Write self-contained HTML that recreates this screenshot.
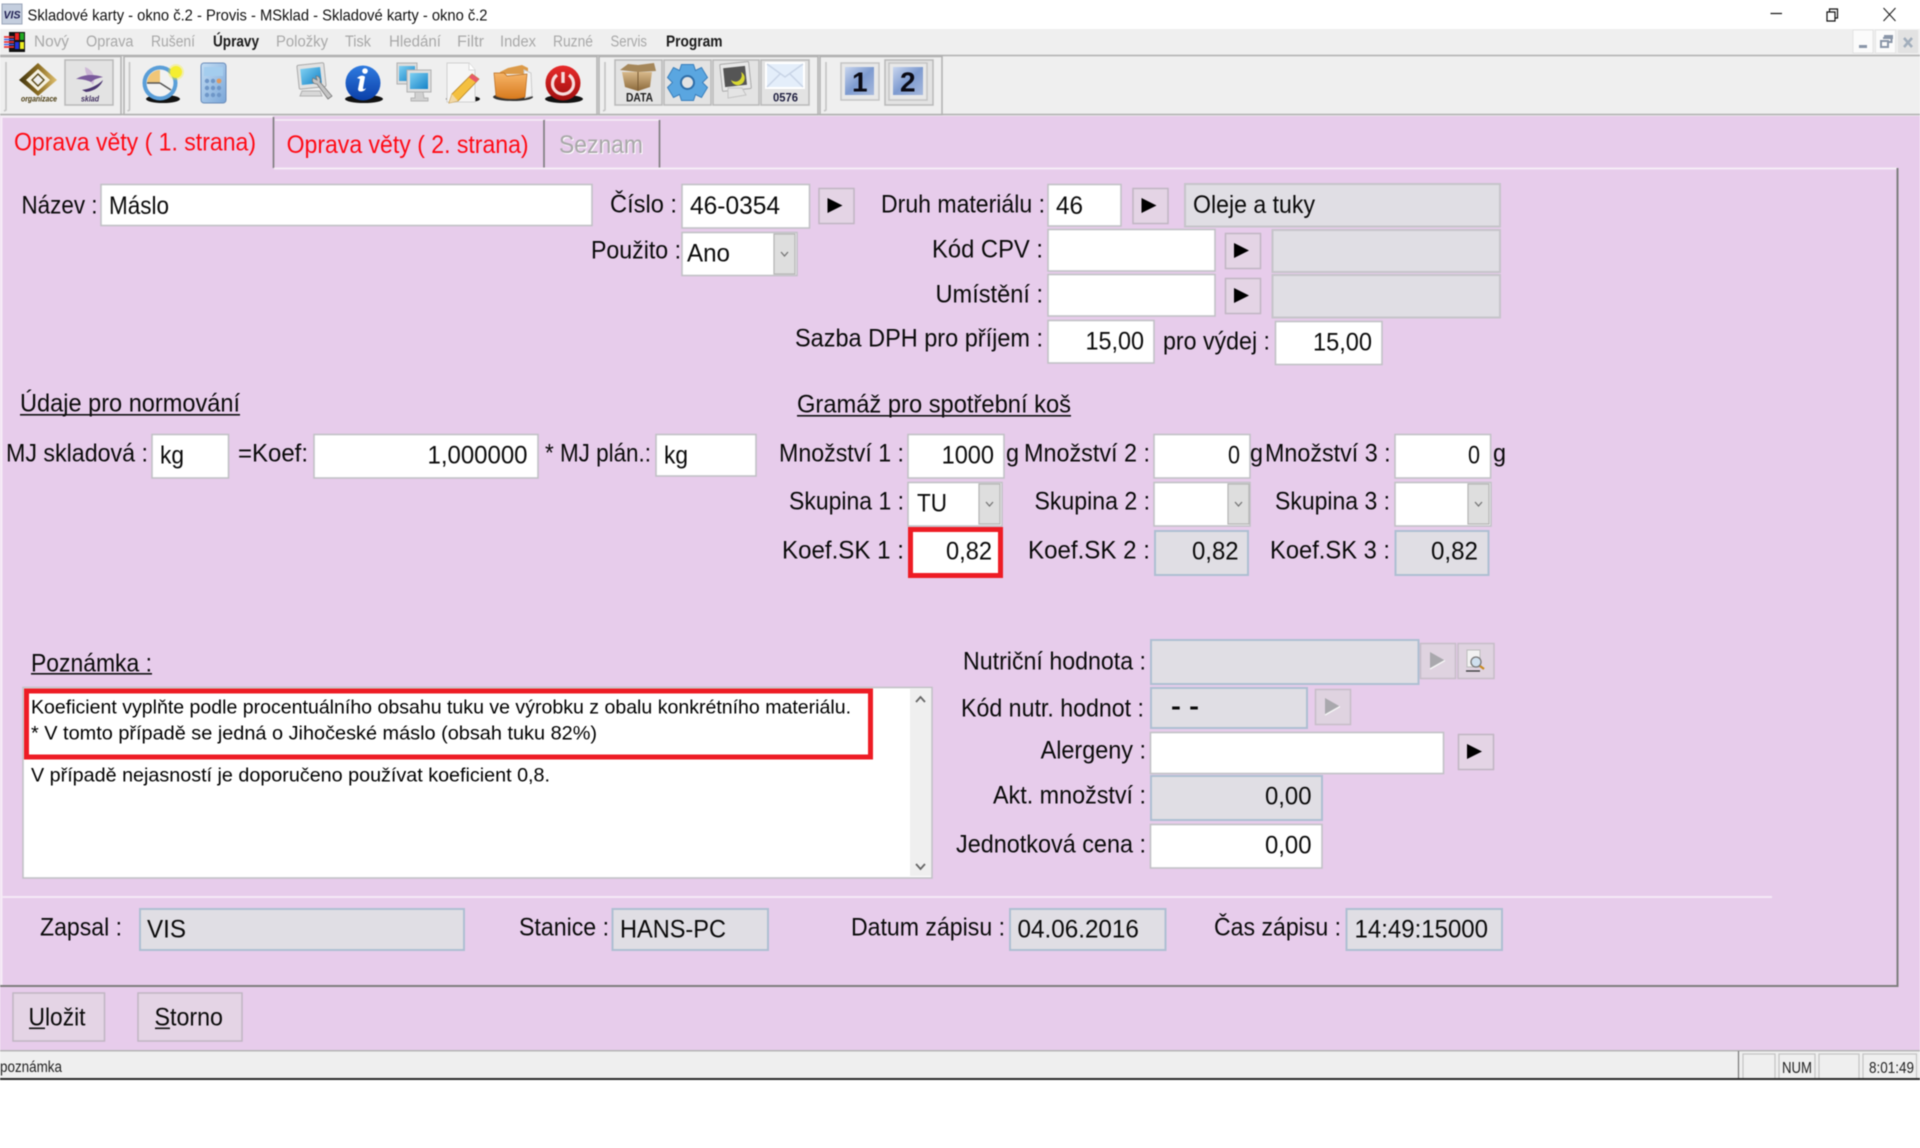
<!DOCTYPE html>
<html lang="cs"><head><meta charset="utf-8"><title>Skladové karty</title>
<style>
html,body{margin:0;padding:0;background:#fff;width:1920px;height:1148px;overflow:hidden}
svg{display:block;filter:blur(.4px)}
text{font-family:"Liberation Sans",Arial,sans-serif;fill:#0a0a0a;font-size:25px;transform:translateY(.6px)}
.m{font-size:15.5px;fill:#a8a8a8}
.mb{font-size:15.5px;fill:#1a1a1a;font-weight:bold}
.t{font-size:16px;fill:#111}
.tab{font-size:25px;fill:#ff0a14}
.memo{font-size:19.5px;fill:#000}
.st{font-size:15.5px;fill:#222}
.i{fill:#fff;stroke:#c2c2c6;stroke-width:1.6}
.r{fill:#e0dee4;stroke:#aebfd2;stroke-width:2}
.g{fill:#e0dee4;stroke:#c6c4ca;stroke-width:2}
.b{fill:#e4d4e5;stroke:#c0b6c2;stroke-width:1.5}
.tb{fill:#e3e3e3;stroke:#b9b9b9;stroke-width:1.5}
.sec{fill:#efefef;stroke:#b0b0b0;stroke-width:1.5}
.cb{fill:#dedede;stroke:#b4b4b4;stroke-width:1.2}
.ch{fill:none;stroke:#777;stroke-width:1.3}
.red{fill:none;stroke:#ee1c25;stroke-width:5}
</style></head><body>
<svg xmlns="http://www.w3.org/2000/svg" width="1920" height="1148" viewBox="0 0 1920 1148">
<defs>
<linearGradient id="gold" x1="0" y1="0" x2="1" y2="0"><stop offset="0" stop-color="#3f3410"/><stop offset=".5" stop-color="#8a6c22"/><stop offset="1" stop-color="#e0c070"/></linearGradient>
<linearGradient id="blue" x1="0" y1="0" x2="0" y2="1"><stop offset="0" stop-color="#2f7be0"/><stop offset="1" stop-color="#0b3fa8"/></linearGradient>
<linearGradient id="scr" x1="0" y1="0" x2="1" y2="1"><stop offset="0" stop-color="#7fd0f2"/><stop offset="1" stop-color="#1583c8"/></linearGradient>
<linearGradient id="fold" x1="0" y1="0" x2="0" y2="1"><stop offset="0" stop-color="#f6b568"/><stop offset="1" stop-color="#d87a1e"/></linearGradient>
<linearGradient id="pw" x1="0" y1="0" x2="0" y2="1"><stop offset="0" stop-color="#e82a2a"/><stop offset="1" stop-color="#a00e0e"/></linearGradient>
<linearGradient id="box" x1="0" y1="0" x2="0" y2="1"><stop offset="0" stop-color="#d8b98a"/><stop offset="1" stop-color="#8c6a3c"/></linearGradient>
<linearGradient id="sky" x1="0" y1="0" x2="1" y2="1"><stop offset="0" stop-color="#c9d6ee"/><stop offset=".5" stop-color="#7e9bd0"/><stop offset="1" stop-color="#a6b8dc"/></linearGradient>
<linearGradient id="calc" x1="0" y1="0" x2="1" y2="1"><stop offset="0" stop-color="#c4def4"/><stop offset="1" stop-color="#7aa6d8"/></linearGradient>
<g id="ar"><rect class="b" x=".5" y=".5" width="35" height="35"/><polygon points="9,10 9,25 24,17.5" fill="#000"/></g>
<g id="ard"><rect x=".5" y=".5" width="35" height="35" fill="#dfd3e0" stroke="#c6bdc8" stroke-width="1.5"/><polygon points="10,9 10,26 25,17.5" fill="#a9a8ad"/><polyline points="10,26 25,17.5" stroke="#f6f6f6" stroke-width="1.5" fill="none"/></g>
<g id="cv"><rect class="cb" x="0" y="0" width="21" height="40"/><path class="ch" d="M7,18 l3.5,4 l3.5,-4"/></g>
</defs>

<rect width="1920" height="1148" fill="#fff"/>
<!-- title bar -->
<rect x="2" y="4" width="20" height="20" fill="#c4cede" stroke="#9aa4b8"/>
<text x="3.5" y="18" textLength="17" lengthAdjust="spacingAndGlyphs" style="font-size:11px;font-weight:bold;font-style:italic;fill:#1c1c50">VIS</text>
<text class="t" x="27.5" y="20" textLength="460" lengthAdjust="spacingAndGlyphs">Skladové karty - okno č.2 - Provis - MSklad - Skladové karty - okno č.2</text>
<path d="M1770.5,13.5h11.5" stroke="#111" stroke-width="1.2"/>
<path d="M1827,12h8v9h-8zM1829.5,12v-3h8v9h-2.5" fill="none" stroke="#111" stroke-width="1.2"/>
<path d="M1883.5,8l12,13M1895.5,8l-12,13" stroke="#222" stroke-width="1.1"/>

<!-- menu bar -->
<rect x="0" y="29" width="1920" height="27" fill="#efefef"/>
<rect x="9" y="32" width="16" height="20" fill="#111"/>
<rect x="15" y="33" width="4" height="7" fill="#e22"/><rect x="20" y="33" width="4" height="7" fill="#2a2"/><rect x="15" y="42" width="4" height="7" fill="#23d"/><rect x="20" y="42" width="4" height="7" fill="#ee2"/>
<path d="M4,37h10M4,42h10M4,47h10" stroke="#e33" stroke-width="1.8"/><path d="M4,39.5h10M4,44.5h10" stroke="#46e" stroke-width="1.6"/>
<text class="m" x="34" y="46" textLength="35" lengthAdjust="spacingAndGlyphs">Nový</text>
<text class="m" x="86" y="46" textLength="47.5" lengthAdjust="spacingAndGlyphs">Oprava</text>
<text class="m" x="151" y="46" textLength="44" lengthAdjust="spacingAndGlyphs">Rušení</text>
<text class="mb" x="213" y="46" textLength="46" lengthAdjust="spacingAndGlyphs">Úpravy</text>
<text class="m" x="276" y="46" textLength="52" lengthAdjust="spacingAndGlyphs">Položky</text>
<text class="m" x="345" y="46" textLength="26" lengthAdjust="spacingAndGlyphs">Tisk</text>
<text class="m" x="389" y="46" textLength="52" lengthAdjust="spacingAndGlyphs">Hledání</text>
<text class="m" x="457" y="46" textLength="27" lengthAdjust="spacingAndGlyphs">Filtr</text>
<text class="m" x="500" y="46" textLength="36" lengthAdjust="spacingAndGlyphs">Index</text>
<text class="m" x="553" y="46" textLength="40" lengthAdjust="spacingAndGlyphs">Ruzné</text>
<text class="m" x="610.5" y="46" textLength="36.5" lengthAdjust="spacingAndGlyphs">Servis</text>
<text class="mb" x="666" y="46" textLength="56.5" lengthAdjust="spacingAndGlyphs">Program</text>
<rect x="1853" y="30" width="20" height="23" fill="#fbfbfb" stroke="#e4e4e4"/><rect x="1859" y="45" width="8" height="3" fill="#8a96a8"/>
<rect x="1875.5" y="30" width="20" height="23" fill="#fbfbfb" stroke="#e4e4e4"/><path d="M1883,38h9v-2h-7v2M1881,41h7v6h-7z M1888,42h3.5v-6" fill="none" stroke="#8a96a8" stroke-width="2"/>
<rect x="1898" y="30" width="20" height="23" fill="#e2e2e2"/><path d="M1904,38l8,9M1912,38l-8,9" stroke="#a2aebc" stroke-width="2.5"/>

<!-- toolbar -->
<rect x="0" y="56" width="1920" height="60" fill="#efefef"/>
<path d="M0,55.5H1920M0,114.5H1920" stroke="#b0b0b0" stroke-width="1.6"/>
<rect class="sec" x="-2" y="56.5" width="123" height="58"/>
<rect class="sec" x="124" y="56.5" width="473" height="58"/>
<rect class="sec" x="599" y="56.5" width="219" height="58"/>
<rect class="sec" x="820" y="56.5" width="122" height="58"/>
<path d="M6,62v48l-2,1M129.5,62v48l-2,1M605,62v48l-2,1M826,62v48l-2,1" fill="none" stroke="#c4c4c4" stroke-width="1.6"/>

<!-- organizace -->
<polygon points="38,63 57,80 38,96 19,80" fill="url(#gold)"/>
<polygon points="38,69 50,80 38,91 26,80" fill="#f6f2e2"/>
<polygon points="38,74 44,80 38,86 32,80" fill="#efefef" stroke="#5a4a18" stroke-width="1.4"/>
<text x="21" y="101" textLength="36" lengthAdjust="spacingAndGlyphs" style="font-size:8px;font-weight:bold;font-style:italic;fill:#4a3c10">organizace</text>
<rect class="tb" x="65" y="60" width="48" height="45"/>
<path d="M85,67c8,3 11,10 8,18c-4,-5 -8,-11 -8,-18z" fill="#cdb8d6"/>
<path d="M76,79c8,-5 18,-5 27,-2c-4,1 -9,2 -12,5c-4,-2 -10,-3 -15,-3z" fill="#7a5a9c"/>
<path d="M82,90c7,-1 15,-4 21,-10c-2,6 -8,11 -17,12z" fill="#4a3470"/>
<text x="81" y="101" textLength="18" lengthAdjust="spacingAndGlyphs" style="font-size:8px;font-weight:bold;font-style:italic;fill:#3c2a5c">sklad</text>

<!-- clock -->
<ellipse cx="163" cy="99" rx="17" ry="4" fill="#111"/>
<circle cx="160" cy="83" r="17.5" fill="#5a9ed8"/><circle cx="160" cy="83" r="13.5" fill="#f2f2f2"/>
<path d="M160,83V70a13,13 0 0 0-13,13z" fill="#f0c678"/><path d="M160,83l-13,0M160,83l11,7" stroke="#555" stroke-width="1.6"/>
<circle cx="176" cy="72" r="6" fill="#f5ee30"/><circle cx="176" cy="72" r="8" fill="#f5ee30" opacity=".35"/>
<!-- calc -->
<rect x="201" y="63" width="25" height="40" rx="3" fill="url(#calc)" stroke="#6a8cba"/><rect x="204" y="67" width="19" height="9" fill="#a4cdee"/>
<g fill="#6f97c8"><circle cx="207" cy="81" r="2.2"/><circle cx="213" cy="81" r="2.2"/><circle cx="219" cy="81" r="2.4" fill="#e09a60"/><circle cx="207" cy="88" r="2.2"/><circle cx="213" cy="88" r="2.2"/><circle cx="219" cy="88" r="2.2"/><circle cx="207" cy="95" r="2.2"/><circle cx="213" cy="95" r="2.2"/><circle cx="219" cy="95" r="2.2"/></g>
<!-- tools -->
<rect x="298" y="64" width="27" height="24" rx="1.5" fill="#e2e2e2" stroke="#aaa" transform="rotate(-6 311 76)"/><rect x="301" y="68" width="20" height="16" fill="url(#scr)" transform="rotate(-6 311 76)"/>
<path d="M302,91h18l2,5h-22z" fill="#d8d8d8" stroke="#b0b0b0"/>
<path d="M313,78c-2,4 1,6 4,6l11,15l4,-3l-12,-14c1,-3 -1,-6 -4,-6l1,4z" fill="#c4c4c4" stroke="#777" stroke-width=".8"/>
<!-- info -->
<ellipse cx="364" cy="99" rx="19" ry="4" fill="#111"/><circle cx="363" cy="83" r="17.5" fill="url(#blue)"/>
<path d="M357,78c3,-3 7,-3 8,-1l-2,11c0,2 2,1 3,0c-1,4 -8,5 -8,1l2,-10z" fill="#fff"/><circle cx="365" cy="71" r="2.8" fill="#fff"/>
<!-- monitors -->
<rect x="397" y="63" width="20" height="21" fill="#dcdcdc" stroke="#b0b0b0"/><rect x="399" y="66" width="16" height="15" fill="url(#scr)"/>
<rect x="407" y="70" width="24" height="22" fill="#dedede" stroke="#b0b0b0"/><rect x="410" y="73" width="18" height="16" fill="url(#scr)"/>
<path d="M415,92h8l1,6h4v3h-17v-3h4z" fill="#d0d0d0" stroke="#b4b4b4"/>
<!-- pencil page -->
<ellipse cx="463" cy="99" rx="17" ry="3.5" fill="#111"/>
<path d="M447,63h22l6,7v32h-28z" fill="#f5f5f5" stroke="#d0d0d0"/><path d="M469,63v7h6" fill="#fff" stroke="#d8d8d8"/>
<path d="M472,74l7,5l-21,22l-9,2l3,-9z" fill="#f4c040" stroke="#b88420" stroke-width=".8"/><path d="M472,74l7,5l-3,3.5l-7,-5z" fill="#e85a6a"/><path d="M449,103l3,-9l6,7z" fill="#f0d8a8"/>
<!-- folder -->
<ellipse cx="513" cy="97" rx="20" ry="4" fill="#333"/>
<path d="M500,72l8,-4l14,-3l6,3v6h-28z" fill="#dc9a48"/><path d="M524,70l7,3l1,23l-7,2z" fill="#f4f4f4" stroke="#ccc"/>
<path d="M494,73h10l3,3l20,-2l-2,23c-10,3 -22,2 -29,-1z" fill="url(#fold)" stroke="#b8691c" stroke-width=".7"/>
<!-- power -->
<ellipse cx="564" cy="99" rx="19" ry="4" fill="#111"/><circle cx="563" cy="83" r="17.5" fill="url(#pw)"/>
<path d="M557,75a10.5,10.5 0 1 0 12,0" fill="none" stroke="#f6dcdc" stroke-width="3.2"/><path d="M563,72v11" stroke="#f6dcdc" stroke-width="3.4"/>

<!-- section 3 -->
<rect class="tb" x="615" y="60" width="47" height="45"/><rect class="tb" x="664" y="60" width="47" height="45"/><rect class="tb" x="713" y="60" width="46" height="45"/><rect class="tb" x="761" y="60" width="48" height="45"/>
<path d="M620,70l8,-6l10,1l16,-2l2,8l-18,1z" fill="#a5875a"/><path d="M622,72h30l-2,15l-12,4l-13,-4z" fill="url(#box)"/><path d="M638,72v19" stroke="#7a5c34"/>
<text x="626" y="101" textLength="27" lengthAdjust="spacingAndGlyphs" style="font-size:12px;font-weight:bold;fill:#202020">DATA</text>
<g transform="translate(687.5,82.5)"><g fill="#5aa6e0" stroke="#3a7fbc"><path d="M-6,-18h12l2,6l6,-3l6,10l-5,5l5,5l-6,10l-6,-3l-2,6h-12l-2,-6l-6,3l-6,-10l5,-5l-5,-5l6,-10l6,3z"/></g><circle r="6.5" fill="#e3e3e3" stroke="#2f6ea8" stroke-width="2"/></g>
<rect x="721" y="63" width="29" height="27" rx="1" fill="#e8e8e8" stroke="#aaa" transform="rotate(-6 735 76)"/><rect x="724" y="67" width="22" height="19" fill="#555" transform="rotate(-6 735 76)"/>
<path d="M741,72a7,7 0 1 1-10,8a6.5,6.5 0 0 0 10,-8z" fill="#d8d830"/><path d="M728,88h14l4,7l-18,3z" fill="#e4e4e4" stroke="#c4c4c4"/>
<rect x="766" y="63" width="38" height="25" fill="#e4eefa" stroke="#fff" stroke-width="2"/><path d="M767,64l18,13l18,-13M767,87l13,-13M803,87l-13,-13" fill="none" stroke="#c8d4e6" stroke-width="1.4"/>
<text x="773" y="101" textLength="25" lengthAdjust="spacingAndGlyphs" style="font-size:12px;font-weight:bold;fill:#202040">0576</text>

<!-- section 4 -->
<rect x="841" y="63" width="38" height="37" fill="#e8e8e8" stroke="#c4c4c4" stroke-width="1.5"/><rect x="845" y="67" width="29" height="28" fill="url(#sky)"/>
<text x="852" y="91" style="font-size:28px;font-weight:bold;fill:#0a0a14">1</text>
<rect class="tb" x="885" y="60" width="48" height="45"/><rect x="889" y="63" width="38" height="37" fill="#e8e8e8" stroke="#c4c4c4" stroke-width="1.5"/><rect x="893" y="67" width="30" height="28" fill="url(#sky)"/>
<text x="900" y="91" style="font-size:28px;font-weight:bold;fill:#0a0a14">2</text>

<!-- main background -->
<rect x="0" y="116" width="1920" height="934" fill="#e7cceb"/>

<!-- tabs -->
<path d="M1.5,168V116.8H273" fill="none" stroke="#f6edf7" stroke-width="2"/>
<path d="M273.5,117V168" stroke="#7c7c7c" stroke-width="1.6"/>
<path d="M275,120H544M545.5,120H659" stroke="#f6edf7" stroke-width="1.6"/>
<path d="M544,120V168M659.5,120V168" stroke="#7c7c7c" stroke-width="1.6"/>
<text class="tab" x="14" y="150" textLength="242" lengthAdjust="spacingAndGlyphs">Oprava věty ( 1. strana)</text>
<text class="tab" x="286.6" y="152.5" textLength="242" lengthAdjust="spacingAndGlyphs">Oprava věty ( 2. strana)</text>
<text x="560" y="153.5" textLength="84" lengthAdjust="spacingAndGlyphs" style="fill:#fff">Seznam</text>
<text x="559" y="152.5" textLength="84" lengthAdjust="spacingAndGlyphs" style="fill:#a8a8a8">Seznam</text>
<!-- panel frame -->
<path d="M274,168.5H1897" stroke="#f6edf7" stroke-width="2"/>
<path d="M1.5,168V985" stroke="#f6edf7" stroke-width="2"/>
<path d="M1897.5,168V986H0" fill="none" stroke="#7e7e7e" stroke-width="2"/>

<!-- row 1 -->
<text x="21.5" y="212.7" textLength="76" lengthAdjust="spacingAndGlyphs">Název :</text>
<rect class="i" x="101" y="184.5" width="491" height="41"/>
<text x="109" y="213.5" textLength="60" lengthAdjust="spacingAndGlyphs">Máslo</text>
<text x="610" y="212" textLength="67" lengthAdjust="spacingAndGlyphs">Číslo :</text>
<rect class="i" x="682" y="184.5" width="127.5" height="43.5"/>
<text x="690" y="213.5" textLength="90" lengthAdjust="spacingAndGlyphs">46-0354</text>
<use href="#ar" x="818.5" y="188"/>
<text x="881" y="212" textLength="164" lengthAdjust="spacingAndGlyphs">Druh materiálu :</text>
<rect class="i" x="1048" y="184.5" width="73" height="41.5"/>
<text x="1056" y="213.5" textLength="27" lengthAdjust="spacingAndGlyphs">46</text>
<use href="#ar" x="1132.5" y="188"/>
<rect class="g" x="1185" y="184" width="315" height="42.5"/>
<text x="1193" y="212.5" textLength="122" lengthAdjust="spacingAndGlyphs">Oleje a tuky</text>

<!-- row 2 -->
<text x="591" y="258" textLength="90" lengthAdjust="spacingAndGlyphs">Použito :</text>
<rect class="i" x="682" y="232.5" width="115" height="43"/>
<text x="687" y="261" textLength="43" lengthAdjust="spacingAndGlyphs">Ano</text>
<use href="#cv" x="774" y="234"/>
<text x="932" y="257" textLength="111" lengthAdjust="spacingAndGlyphs">Kód CPV :</text>
<rect class="i" x="1048" y="229.5" width="167" height="41.5"/>
<use href="#ar" x="1225" y="233"/>
<rect class="g" x="1272.5" y="230" width="227.5" height="42"/>
<!-- row 3 -->
<text x="935.5" y="302" textLength="107.5" lengthAdjust="spacingAndGlyphs">Umístění :</text>
<rect class="i" x="1048" y="274.5" width="167" height="41.5"/>
<use href="#ar" x="1225" y="278"/>
<rect class="g" x="1272.5" y="275" width="227.5" height="42.5"/>
<!-- row 4 -->
<text x="795" y="346" textLength="248" lengthAdjust="spacingAndGlyphs">Sazba DPH pro příjem :</text>
<rect class="i" x="1048" y="320.5" width="106" height="42.5"/>
<text x="1085.5" y="349" textLength="58.5" lengthAdjust="spacingAndGlyphs">15,00</text>
<text x="1163" y="349" textLength="107" lengthAdjust="spacingAndGlyphs">pro výdej :</text>
<rect class="i" x="1275.5" y="321.5" width="106.5" height="43"/>
<text x="1313" y="350" textLength="59" lengthAdjust="spacingAndGlyphs">15,00</text>

<!-- headings -->
<text x="20" y="411" textLength="220" lengthAdjust="spacingAndGlyphs">Údaje pro normování</text>
<rect x="20" y="414" width="220" height="1.6" fill="#111"/>
<text x="797" y="412" textLength="274" lengthAdjust="spacingAndGlyphs">Gramáž pro spotřební koš</text>
<rect x="797" y="415" width="274" height="1.6" fill="#111"/>

<!-- MJ row -->
<text x="6" y="461" textLength="142" lengthAdjust="spacingAndGlyphs">MJ skladová :</text>
<rect class="i" x="152" y="434.5" width="76.5" height="43.5"/>
<text x="160" y="463" textLength="24" lengthAdjust="spacingAndGlyphs">kg</text>
<text x="238" y="461" textLength="70" lengthAdjust="spacingAndGlyphs">=Koef:</text>
<rect class="i" x="314" y="434.5" width="224" height="43.5"/>
<text x="427.5" y="463" textLength="100" lengthAdjust="spacingAndGlyphs">1,000000</text>
<text x="545" y="461" textLength="106" lengthAdjust="spacingAndGlyphs">* MJ plán.:</text>
<rect class="i" x="656" y="434.5" width="100" height="41.5"/>
<text x="664" y="463" textLength="24" lengthAdjust="spacingAndGlyphs">kg</text>

<text x="779" y="461" textLength="125" lengthAdjust="spacingAndGlyphs">Množství 1 :</text>
<rect class="i" x="908" y="434.5" width="96" height="43.5"/>
<text x="941.6" y="463" textLength="52.4" lengthAdjust="spacingAndGlyphs">1000</text>
<text x="1006" y="461" textLength="13" lengthAdjust="spacingAndGlyphs">g</text>
<text x="1024" y="461" textLength="126" lengthAdjust="spacingAndGlyphs">Množství 2 :</text>
<rect class="i" x="1154" y="434.5" width="96" height="43.5"/>
<text x="1228" y="463" textLength="12" lengthAdjust="spacingAndGlyphs">0</text>
<text x="1250" y="461" textLength="13" lengthAdjust="spacingAndGlyphs">g</text>
<text x="1265" y="461" textLength="125.6" lengthAdjust="spacingAndGlyphs">Množství 3 :</text>
<rect class="i" x="1395" y="434.5" width="95.6" height="43.5"/>
<text x="1468" y="463" textLength="12" lengthAdjust="spacingAndGlyphs">0</text>
<text x="1493" y="461" textLength="13" lengthAdjust="spacingAndGlyphs">g</text>

<!-- skupina row -->
<text x="789" y="509" textLength="115" lengthAdjust="spacingAndGlyphs">Skupina 1 :</text>
<rect class="i" x="908" y="482.5" width="94" height="43.5"/>
<text x="917" y="511" textLength="30" lengthAdjust="spacingAndGlyphs">TU</text>
<use href="#cv" x="979" y="484"/>
<text x="1034.5" y="509" textLength="115.5" lengthAdjust="spacingAndGlyphs">Skupina 2 :</text>
<rect class="i" x="1154" y="482.5" width="96" height="43.5"/>
<use href="#cv" x="1228" y="484"/>
<text x="1275" y="509" textLength="115" lengthAdjust="spacingAndGlyphs">Skupina 3 :</text>
<rect class="i" x="1395" y="482.5" width="96" height="43.5"/>
<use href="#cv" x="1468" y="484"/>

<!-- koef row -->
<text x="782" y="558" textLength="122" lengthAdjust="spacingAndGlyphs">Koef.SK 1 :</text>
<rect x="910.5" y="529.5" width="90" height="46" class="red" style="fill:#fff"/>
<text x="946" y="559" textLength="46" lengthAdjust="spacingAndGlyphs">0,82</text>
<text x="1028" y="558" textLength="122" lengthAdjust="spacingAndGlyphs">Koef.SK 2 :</text>
<rect class="r" x="1155" y="531" width="93" height="44"/>
<text x="1192" y="559" textLength="46.6" lengthAdjust="spacingAndGlyphs">0,82</text>
<text x="1270" y="558" textLength="120" lengthAdjust="spacingAndGlyphs">Koef.SK 3 :</text>
<rect class="r" x="1395.5" y="531" width="93" height="44"/>
<text x="1431" y="559" textLength="47" lengthAdjust="spacingAndGlyphs">0,82</text>

<!-- poznamka -->
<text x="31" y="671" textLength="121" lengthAdjust="spacingAndGlyphs">Poznámka :</text>
<rect x="31" y="673" width="121" height="1.6" fill="#111"/>
<rect class="i" x="23" y="687.5" width="909" height="190.5"/>
<rect x="910" y="689" width="21" height="187" fill="#efefef"/>
<path d="M916,702l4.5,-5l4.5,5M916,864l4.5,5l4.5,-5" fill="none" stroke="#666" stroke-width="1.8"/>
<text class="memo" x="31" y="713" textLength="820" lengthAdjust="spacingAndGlyphs">Koeficient vyplňte podle procentuálního obsahu tuku ve výrobku z obalu konkrétního materiálu.</text>
<text class="memo" x="31" y="739" textLength="566" lengthAdjust="spacingAndGlyphs">* V tomto případě se jedná o Jihočeské máslo (obsah tuku 82%)</text>
<text class="memo" x="31" y="781" textLength="519" lengthAdjust="spacingAndGlyphs">V případě nejasností je doporučeno používat koeficient 0,8.</text>
<rect class="red" x="26.5" y="691" width="844" height="66"/>

<!-- right block -->
<text x="963" y="669" textLength="183" lengthAdjust="spacingAndGlyphs">Nutriční hodnota :</text>
<rect class="r" x="1151" y="640" width="267.5" height="44"/>
<use href="#ard" x="1420" y="643"/>
<rect x="1458" y="643.5" width="36" height="35" fill="#dfd3e0" stroke="#c6bdc8" stroke-width="1.5"/>
<rect x="1467" y="650" width="13" height="17" fill="#f2f2f2" stroke="#bbb"/><circle cx="1476" cy="662" r="5" fill="#cfe0ee" stroke="#777" stroke-width="1.3"/><path d="M1480,666l4,3" stroke="#c88a20" stroke-width="2.2"/><path d="M1466,671h14" stroke="#333" stroke-width="1.3"/>
<text x="961" y="716" textLength="183" lengthAdjust="spacingAndGlyphs">Kód nutr. hodnot :</text>
<rect class="r" x="1151" y="688" width="156" height="40"/>
<text x="1171" y="714" textLength="28" lengthAdjust="spacingAndGlyphs" style="font-weight:bold">- -</text>
<use href="#ard" x="1315" y="689"/>
<text x="1040.6" y="758" textLength="105.4" lengthAdjust="spacingAndGlyphs">Alergeny :</text>
<rect class="i" x="1150.5" y="732.5" width="293" height="41"/>
<use href="#ar" x="1458" y="734"/>
<text x="993" y="803" textLength="153" lengthAdjust="spacingAndGlyphs">Akt. množství :</text>
<rect class="r" x="1151" y="776" width="171" height="44"/>
<text x="1265" y="804" textLength="46.5" lengthAdjust="spacingAndGlyphs">0,00</text>
<text x="956" y="852" textLength="190" lengthAdjust="spacingAndGlyphs">Jednotková cena :</text>
<rect class="i" x="1150.5" y="824.5" width="171.5" height="43.5"/>
<text x="1265" y="853" textLength="46.5" lengthAdjust="spacingAndGlyphs">0,00</text>

<!-- divider -->
<rect x="2" y="896" width="1770" height="2" fill="#f4e9f6"/>

<!-- footer fields -->
<text x="40" y="935" textLength="82" lengthAdjust="spacingAndGlyphs">Zapsal :</text>
<rect class="r" x="140" y="909" width="324" height="41"/>
<text x="147" y="937" textLength="39" lengthAdjust="spacingAndGlyphs">VIS</text>
<text x="519" y="935" textLength="90" lengthAdjust="spacingAndGlyphs">Stanice :</text>
<rect class="r" x="612.5" y="909" width="155.5" height="41"/>
<text x="620" y="937" textLength="106" lengthAdjust="spacingAndGlyphs">HANS-PC</text>
<text x="851" y="935" textLength="154" lengthAdjust="spacingAndGlyphs">Datum zápisu :</text>
<rect class="r" x="1010" y="909" width="155.5" height="41"/>
<text x="1017.5" y="937" textLength="121.4" lengthAdjust="spacingAndGlyphs">04.06.2016</text>
<text x="1214" y="935" textLength="127" lengthAdjust="spacingAndGlyphs">Čas zápisu :</text>
<rect class="r" x="1346.5" y="909" width="155.5" height="41"/>
<text x="1354.5" y="937" textLength="133.5" lengthAdjust="spacingAndGlyphs">14:49:15000</text>

<!-- buttons -->
<rect class="b" x="13" y="993" width="91.5" height="48"/>
<text x="28.5" y="1025" textLength="57" lengthAdjust="spacingAndGlyphs">Uložit</text>
<rect x="29" y="1027.5" width="16" height="1.6" fill="#111"/>
<rect class="b" x="138" y="993" width="104" height="48"/>
<text x="154.5" y="1025" textLength="68.5" lengthAdjust="spacingAndGlyphs">Storno</text>
<rect x="155" y="1027.5" width="15" height="1.6" fill="#111"/>

<!-- status bar -->
<rect x="0" y="1050" width="1920" height="28" fill="#efefef"/>
<rect x="0" y="1050" width="1920" height="1.5" fill="#b4b4b4"/>
<rect x="0" y="1078" width="1920" height="2" fill="#2a2a2a"/>
<text class="st" x="0" y="1071.5" textLength="62" lengthAdjust="spacingAndGlyphs">poznámka</text>
<path d="M1738.5,1051V1078" stroke="#777" stroke-width="1.2"/>
<path d="M1743,1078V1054H1775V1078M1779,1078V1054H1815V1078M1819,1078V1054H1859V1078M1863,1078V1054H1916.5V1078" fill="none" stroke="#c4c4c4" stroke-width="1.2"/>
<text class="st" x="1782" y="1072.5" textLength="30" lengthAdjust="spacingAndGlyphs">NUM</text>
<text class="st" x="1869" y="1072.5" textLength="45" lengthAdjust="spacingAndGlyphs">8:01:49</text>
</svg>
</body></html>
